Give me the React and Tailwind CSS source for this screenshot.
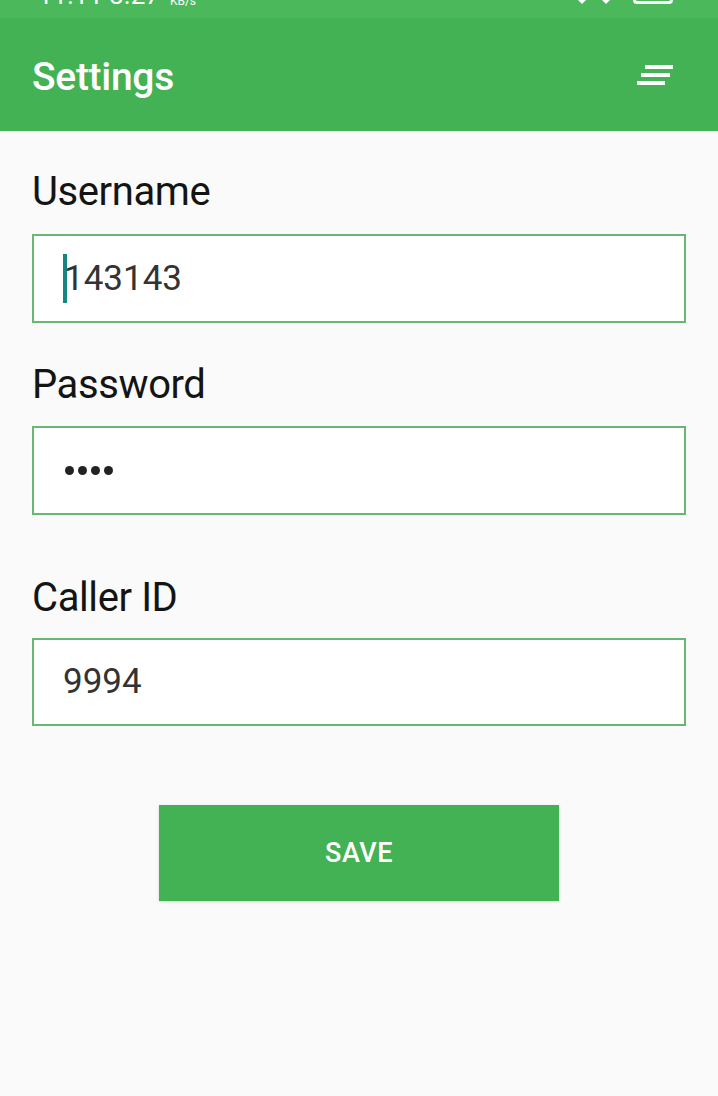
export default function App() {
  return (
    <div className="w-[718px] min-h-[1096px] bg-[#fafafa] font-['Roboto',sans-serif]">
      {/* status bar (cut off at the top) */}
      <div className="h-[18px] bg-[#4bb85b] overflow-hidden flex justify-between pl-[38px] pr-[45px] text-white">
        <div className="flex items-end gap-[10px] h-[24px] -mt-[17px]">
          <span className="text-[26px] leading-[24px]">11:11 3.27</span>
          <span className="text-[12px] leading-[12px]">KB/s</span>
        </div>
        <div className="flex items-end gap-[10px] h-[24px] -mt-[20px]">
          <svg width="14" height="24" viewBox="0 0 14 24"><path d="M0 17 L7 24 L14 17 Z" fill="white" /></svg>
          <svg width="14" height="24" viewBox="0 0 14 24"><path d="M0 17 L7 24 L14 17 Z" fill="white" /></svg>
          <div className="ml-[10px] w-[40px] h-[24px] rounded-[4px] border-[3px] border-white"></div>
        </div>
      </div>

      {/* app bar */}
      <div className="h-[113px] bg-[#43b254] flex items-center justify-between pl-[32px] pr-[45px]">
        <span className="mt-[5px] text-white text-[39px] leading-[40px] font-medium tracking-[-0.3px]">Settings</span>
        <svg width="36" height="20" viewBox="0 0 36 20">
          <rect x="8" y="0" width="28" height="4" fill="white" />
          <rect x="4" y="8" width="29" height="4" fill="white" />
          <rect x="0" y="16" width="28" height="4" fill="white" />
        </svg>
      </div>

      {/* form */}
      <div className="px-[32px] flex flex-col">
        <label className="mt-[41px] text-[40px] leading-[40px] text-[#141414] tracking-[-0.4px]">Username</label>
        <div className="mt-[22px] h-[89px] border-2 border-[#68b874] bg-white flex items-center pl-[29px]">
          <span className="w-[4px] h-[49px] bg-[#14857f] -mr-[3px]"></span>
          <span className="text-[35px] leading-[40px] text-[#333333]">143143</span>
        </div>

        <label className="mt-[42px] text-[40px] leading-[40px] text-[#141414] tracking-[-0.4px]">Password</label>
        <div className="mt-[21px] h-[89px] border-2 border-[#68b874] bg-white flex items-center gap-[4px] pl-[31px]">
          <span className="w-[9px] h-[9px] rounded-full bg-[#222]"></span>
          <span className="w-[9px] h-[9px] rounded-full bg-[#222]"></span>
          <span className="w-[9px] h-[9px] rounded-full bg-[#222]"></span>
          <span className="w-[9px] h-[9px] rounded-full bg-[#222]"></span>
        </div>

        <label className="mt-[63px] text-[40px] leading-[40px] text-[#141414] tracking-[-0.4px]">Caller ID</label>
        <div className="mt-[20px] h-[88px] border-2 border-[#68b874] bg-white flex items-center pl-[29px]">
          <span className="text-[35px] leading-[40px] text-[#333333]">9994</span>
        </div>

        <button className="mt-[79px] mx-auto w-[400px] h-[96px] bg-[#43b254] shadow-[0_1px_3px_rgba(0,0,0,0.15)] text-white text-[27px] font-medium tracking-[0.5px]">
          SAVE
        </button>
      </div>
    </div>
  );
}
